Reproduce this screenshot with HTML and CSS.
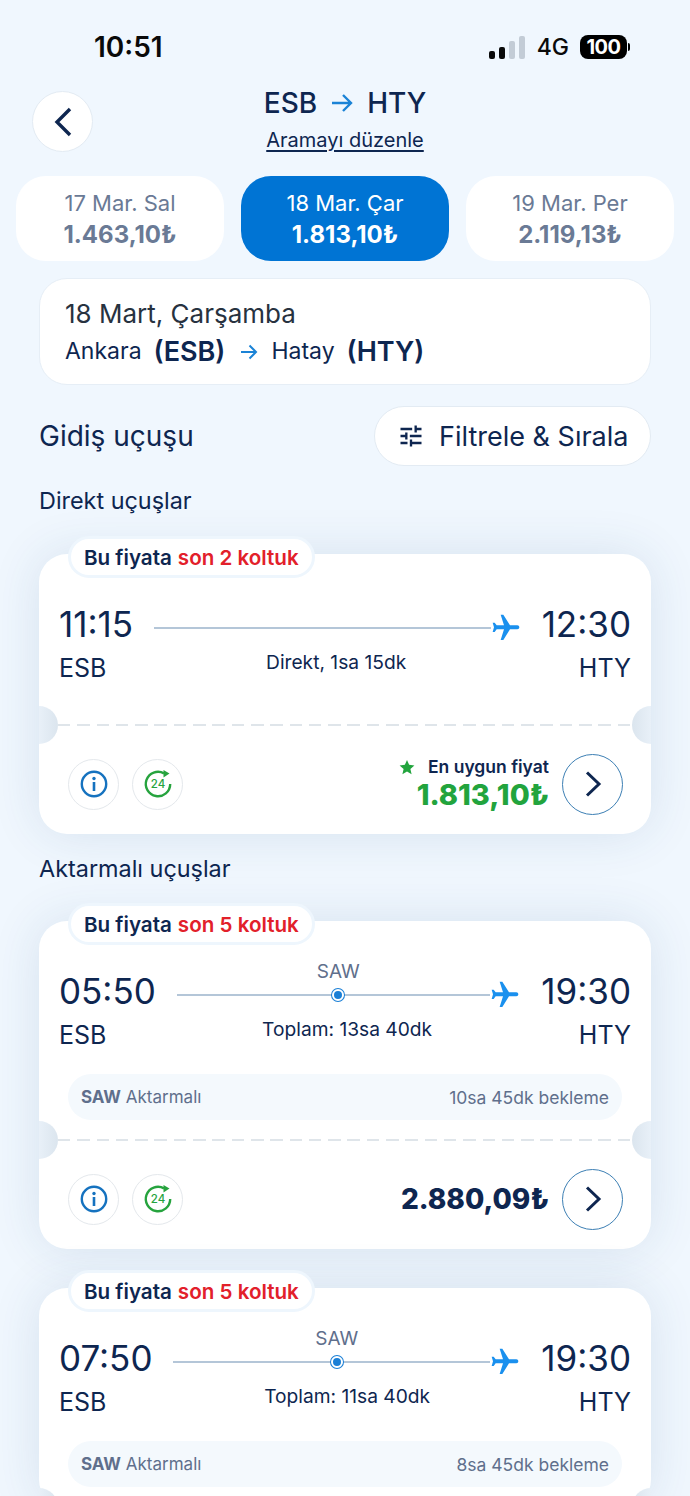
FILE: index.html
```html
<!DOCTYPE html>
<html lang="tr">
<head>
<meta charset="utf-8">
<title>ESB → HTY</title>
<link rel="stylesheet" href="styles.css">
</head>
<body>
<div class="page">
  <div class="status">
    <span class="clock">10:51</span>
    <div class="status-right">
      <div class="signal"><i class="b1"></i><i class="b2"></i><i class="b3"></i><i class="b4"></i></div>
      <span class="net">4G</span>
      <div class="battery"><span class="battery-body">100</span><i class="battery-nub"></i></div>
    </div>
  </div>

  <header class="header">
    <div class="back">
      <svg width="22" height="32" viewBox="0 0 22 32"><path d="M18 3 5 16l13 13" fill="none" stroke="#0e2650" stroke-width="3.4"/></svg>
    </div>
    <div class="title-block">
      <div class="title">
        <span>ESB</span>
        <svg class="title-arrow" width="22" height="20" viewBox="0 0 22 20"><path d="M1 10h19M12 2l8 8-8 8" fill="none" stroke="#1b83d6" stroke-width="2.4"/></svg>
        <span>HTY</span>
      </div>
      <a class="edit">Aramayı düzenle</a>
    </div>
    <div></div>
  </header>

  <nav class="tabs">
    <div class="tab"><span class="tab-date">17 Mar. Sal</span><span class="tab-price">1.463,10₺</span></div>
    <div class="tab tab-active"><span class="tab-date">18 Mar. Çar</span><span class="tab-price">1.813,10₺</span></div>
    <div class="tab"><span class="tab-date">19 Mar. Per</span><span class="tab-price">2.119,13₺</span></div>
  </nav>

  <section class="info">
    <div class="info-date">18 Mart, Çarşamba</div>
    <div class="info-route">
      <span>Ankara</span><b>(ESB)</b>
      <svg class="info-arrow" width="18" height="16" viewBox="0 0 18 16"><path d="M1 8h15M9.500 1.500 16 8l-6.500 6.500" fill="none" stroke="#1b83d6" stroke-width="2"/></svg>
      <span>Hatay</span><b>(HTY)</b>
    </div>
  </section>

  <div class="heading-row">
    <h2 class="heading">Gidiş uçuşu</h2>
    <div class="filter">
      <svg width="28" height="28" viewBox="0 0 24 24"><path fill="#0e2650" d="M3 17v2h6v-2H3zM3 5v2h10V5H3zm10 16v-2h8v-2h-8v-2h-2v6h2zM7 9v2H3v2h4v2h2V9H7zm14 4v-2H11v2h10zm-6-4h2V7h4V5h-4V3h-2v6z"/></svg>
      <span>Filtrele &amp; Sırala</span>
    </div>
  </div>

  <h3 class="section">Direkt uçuşlar</h3>

  <article class="card">
    <div class="tag">Bu fiyata <em>son 2 koltuk</em></div>
    <div class="card-top card-top-direct">
      <div class="route">
        <span class="time">11:15</span>
        <div class="line"><i class="seg"></i></div>
        <svg class="plane" width="32" height="32" viewBox="0 0 24 24"><path transform="rotate(90 12 12)" fill="#1a90ee" d="M21 16v-2l-8-5V3.500c0-.83-.67-1.500-1.500-1.500S10 2.670 10 3.500V9l-8 5v2l8-2.500V19l-2 1.500V22l3.500-1 3.500 1v-1.500L13 19v-5.500l8 2.500z"/></svg>
        <span class="time">12:30</span>
      </div>
      <div class="codes">
        <span class="code">ESB</span>
        <span class="dur dur-a">Direkt, 1sa 15dk</span>
        <span class="code">HTY</span>
      </div>
    </div>
    <div class="divider"><i class="notch notch-l"></i><i class="notch notch-r"></i></div>
    <div class="card-bottom">
      <div class="round">
        <svg width="30" height="30" viewBox="0 0 30 30"><circle cx="15" cy="15" r="12.200" fill="none" stroke="#1572bf" stroke-width="2.400"/><circle cx="15" cy="9.500" r="1.700" fill="#1572bf"/><rect x="13.700" y="13" width="2.600" height="9" fill="#1572bf"/></svg>
      </div>
      <div class="round">
        <svg width="30" height="30" viewBox="0 0 30 30"><path d="M21 4.400A12.200 12.200 0 1 0 27.200 15" fill="none" stroke="#26a33e" stroke-width="2.400"/><path d="M20.500 1 26.500 4.600 20.500 8.500z" fill="#26a33e"/><text x="15" y="19" class="t24">24</text></svg>
      </div>
      <div class="price-block">
        <div class="best">
          <svg width="16" height="16" viewBox="0 0 24 24"><path fill="#22a43d" d="M12 1.500l3.200 7.300 7.900.8-6 5.300 1.800 7.800L12 18.600l-6.900 4.100 1.800-7.800-6-5.300 7.900-.8z"/></svg>
          <span>En uygun fiyat</span>
        </div>
        <div class="price price-best">1.813,10₺</div>
      </div>
      <div class="next">
        <svg width="18" height="28" viewBox="0 0 18 28"><path d="M3 2.500 15 14 3 25.500" fill="none" stroke="#0e2650" stroke-width="3"/></svg>
      </div>
    </div>
  </article>

  <h3 class="section section-second">Aktarmalı uçuşlar</h3>

  <article class="card">
    <div class="tag">Bu fiyata <em>son 5 koltuk</em></div>
    <div class="card-top">
      <div class="route">
        <span class="time">05:50</span>
        <div class="line">
          <i class="seg seg-a"></i>
          <div class="stop"><span class="stop-code">SAW</span><i class="dot"></i></div>
          <i class="seg seg-b"></i>
        </div>
        <svg class="plane" width="32" height="32" viewBox="0 0 24 24"><path transform="rotate(90 12 12)" fill="#1a90ee" d="M21 16v-2l-8-5V3.500c0-.83-.67-1.500-1.500-1.500S10 2.670 10 3.500V9l-8 5v2l8-2.500V19l-2 1.500V22l3.500-1 3.500 1v-1.500L13 19v-5.500l8 2.500z"/></svg>
        <span class="time">19:30</span>
      </div>
      <div class="codes">
        <span class="code">ESB</span>
        <span class="dur dur-b">Toplam: 13sa 40dk</span>
        <span class="code">HTY</span>
      </div>
      <div class="layover"><span><b>SAW</b> Aktarmalı</span><span class="wait">10sa 45dk bekleme</span></div>
    </div>
    <div class="divider"><i class="notch notch-l"></i><i class="notch notch-r"></i></div>
    <div class="card-bottom">
      <div class="round">
        <svg width="30" height="30" viewBox="0 0 30 30"><circle cx="15" cy="15" r="12.200" fill="none" stroke="#1572bf" stroke-width="2.400"/><circle cx="15" cy="9.500" r="1.700" fill="#1572bf"/><rect x="13.700" y="13" width="2.600" height="9" fill="#1572bf"/></svg>
      </div>
      <div class="round">
        <svg width="30" height="30" viewBox="0 0 30 30"><path d="M21 4.400A12.200 12.200 0 1 0 27.200 15" fill="none" stroke="#26a33e" stroke-width="2.400"/><path d="M20.500 1 26.500 4.600 20.500 8.500z" fill="#26a33e"/><text x="15" y="19" class="t24">24</text></svg>
      </div>
      <div class="price-block"><div class="price">2.880,09₺</div></div>
      <div class="next">
        <svg width="18" height="28" viewBox="0 0 18 28"><path d="M3 2.500 15 14 3 25.500" fill="none" stroke="#0e2650" stroke-width="3"/></svg>
      </div>
    </div>
  </article>

  <article class="card card-third">
    <div class="tag">Bu fiyata <em>son 5 koltuk</em></div>
    <div class="card-top">
      <div class="route">
        <span class="time">07:50</span>
        <div class="line">
          <i class="seg seg-a"></i>
          <div class="stop"><span class="stop-code">SAW</span><i class="dot"></i></div>
          <i class="seg seg-b"></i>
        </div>
        <svg class="plane" width="32" height="32" viewBox="0 0 24 24"><path transform="rotate(90 12 12)" fill="#1a90ee" d="M21 16v-2l-8-5V3.500c0-.83-.67-1.500-1.500-1.500S10 2.670 10 3.500V9l-8 5v2l8-2.500V19l-2 1.500V22l3.500-1 3.500 1v-1.500L13 19v-5.500l8 2.500z"/></svg>
        <span class="time">19:30</span>
      </div>
      <div class="codes">
        <span class="code">ESB</span>
        <span class="dur dur-b">Toplam: 11sa 40dk</span>
        <span class="code">HTY</span>
      </div>
      <div class="layover"><span><b>SAW</b> Aktarmalı</span><span class="wait">8sa 45dk bekleme</span></div>
    </div>
    <div class="divider"><i class="notch notch-l"></i><i class="notch notch-r"></i></div>
  </article>
</div>
</body>
</html>
```
FILE: styles.css
```css
* { box-sizing: border-box; }
html, body { margin: 0; padding: 0; }
body {
  width: 690px;
  height: 1496px;
  overflow: hidden;
  background: #f0f7fe;
  color: #0e2650;
  font-family: Inter, "Liberation Sans", sans-serif;
}
.page { width: 690px; height: 1496px; overflow: hidden; }

.status {
  height: 91px;
  padding: 3px 60px 0 94px;
  display: flex;
  align-items: center;
  justify-content: space-between;
}
.clock { font-size: 28px; font-weight: 600; color: #0a0a0a; }
.status-right { display: flex; align-items: center; }
.signal { display: flex; align-items: flex-end; gap: 4px; height: 23px; margin-right: 12px; }
.signal i { display: block; width: 6px; border-radius: 2px; }
.b1 { height: 8px; background: #0a0a0a; }
.b2 { height: 12px; background: #0a0a0a; }
.b3 { height: 18px; background: #c3ccd6; }
.b4 { height: 23px; background: #c3ccd6; }
.net { font-size: 23px; font-weight: 500; color: #0a0a0a; margin-right: 11px; }
.battery { display: flex; align-items: center; gap: 1px; }
.battery-body {
  width: 47px; height: 24px; border-radius: 8px;
  background: #000; color: #fff;
  font-size: 20px; font-weight: 700; line-height: 24px; text-align: center; letter-spacing: -.5px;
}
.battery-nub { display: block; width: 2px; height: 8px; background: #000; border-radius: 0 2px 2px 0; }

.header {
  display: grid;
  grid-template-columns: 61px 1fr 61px;
  padding: 0 32px;
  height: 61px;
}
.back {
  width: 61px; height: 61px; border-radius: 50%;
  background: #fff; border: 1px solid #e3ebf3;
  display: flex; align-items: center; justify-content: center;
}
.title-block { display: flex; flex-direction: column; align-items: center; }
.title {
  display: flex; align-items: center; gap: 14px;
  margin-top: -3px; height: 30px;
  font-size: 28px; font-weight: 500; line-height: 30px;
}
.edit {
  margin-top: 10px;
  font-size: 20px; line-height: 24px;
  text-decoration: underline; text-underline-offset: 3px;
}

.tabs {
  display: flex; gap: 17px;
  padding: 0 16px;
  margin-top: 24px;
}
.tab {
  flex: 1; height: 85px;
  background: #fff; border-radius: 30px;
  display: flex; flex-direction: column; align-items: center; justify-content: center;
  color: #6a7a95;
}
.tab-active { background: #0074d4; color: #fff; }
.tab-date { font-size: 22px; line-height: 31px; }
.tab-price { font-size: 24px; font-weight: 700; line-height: 31px; }

.info {
  margin: 17px 39px 0;
  height: 107px;
  padding: 16px 25px 0;
  background: #fff;
  border: 1px solid #e6eef6;
  border-radius: 28px;
}
.info-date { font-size: 26px; line-height: 38px; color: #27323f; }
.info-route { display: flex; align-items: center; gap: 12px; font-size: 23px; line-height: 37px; }
.info-route b { font-size: 27px; font-weight: 600; }
.info-arrow { margin: 0 1px 0 3px; }

.heading-row {
  margin: 21px 39px 0;
  height: 60px;
  display: flex; align-items: center; justify-content: space-between;
}
.heading { margin: 0; font-size: 28px; font-weight: 400; }
.filter {
  width: 277px; height: 60px;
  padding-left: 22px;
  display: flex; align-items: center; gap: 14px;
  background: #fff; border: 1px solid #e3ebf3; border-radius: 30px;
  font-size: 27px;
}

.section {
  margin: 20px 39px 0;
  font-size: 23.400px; font-weight: 400; line-height: 30px;
}
.section-second { margin-bottom: -1px; }

.card {
  position: relative;
  margin: 38px 39px 0;
  background: #fff;
  border-radius: 28px;
  box-shadow: 0 0 50px rgba(30, 70, 120, .12);
}
.card-third { margin-top: 39px; }
.tag {
  position: absolute;
  left: 29px; top: -18px;
  height: 42px;
  padding: 0 13px;
  display: flex; align-items: center; gap: 6px;
  background: #fff;
  border: 3px solid #eef6fd;
  border-radius: 21px;
  font-size: 20.600px; font-weight: 600;
  white-space: nowrap;
}
.tag em { font-style: normal; color: #e2202a; }

.card-top { padding: 50px 20px 19px; }
.card-top-direct { padding-bottom: 42px; }
.route { display: flex; align-items: center; height: 40px; }
.time { font-size: 35px; line-height: 40px; font-weight: 400; }
.line {
  flex: 1;
  display: flex; align-items: center;
  margin: 8px 0 0 21px;
  height: 8px;
}
.seg { display: block; height: 2px; background: #b4c6d8; flex: 1; }
.seg-a { flex: 162; }
.seg-b { flex: 152; }
.stop { position: relative; width: 12px; height: 12px; flex: none; }
.stop-code {
  position: absolute;
  left: 50%; bottom: 17px;
  transform: translateX(-50%);
  font-size: 19px; line-height: 24px; color: #5f6f8c;
}
.dot {
  display: block; width: 12px; height: 12px; border-radius: 50%;
  background: #1a7fd6; border: 2px solid #fff;
  box-shadow: 0 0 0 1px #1a7fd6;
}
.plane { flex: none; margin: 8px 20px 0 -1px; }
.codes {
  display: flex; align-items: center; justify-content: space-between;
  margin-top: 8px; height: 30px;
}
.code { font-size: 25px; margin-top: 2px; }
.dur { font-size: 19.200px; margin-top: -10px; }
.dur-a { margin-right: 13px; }
.dur-b { margin-left: 9px; }
.layover {
  margin: 25px 9px 0;
  height: 46px;
  padding: 0 13px;
  display: flex; align-items: center; justify-content: space-between;
  background: #f4f9fd;
  border-radius: 23px;
  font-size: 17px; color: #5f6f8c;
}
.layover b { font-weight: 700; }
.wait { font-size: 17.500px; }

.divider {
  position: relative;
  height: 2px;
  margin: 0 19px;
  background: repeating-linear-gradient(90deg, #dfe5ea 0 12.500px, transparent 12.500px 19.300px);
}
.notch {
  position: absolute;
  top: -18px;
  width: 19px; height: 38px;
}
.notch-l {
  left: -19px;
  border-radius: 0 19px 19px 0;
  background: linear-gradient(90deg, #e8f0f8, #dbe5ee);
}
.notch-r {
  right: -19px;
  border-radius: 19px 0 0 19px;
  background: linear-gradient(270deg, #e8f0f8, #dbe5ee);
}

.card-bottom {
  height: 108px;
  padding: 8px 28px 0 29px;
  display: flex; align-items: center; gap: 13px;
}
.round {
  width: 51px; height: 51px; border-radius: 50%;
  border: 1px solid #e4e8ec;
  display: flex; align-items: center; justify-content: center;
}
.t24 { font-size: 11.500px; font-weight: 500; fill: #26a33e; text-anchor: middle; font-family: Inter, sans-serif; }
.price-block { margin-left: auto; text-align: right; }
.best {
  display: flex; align-items: center; justify-content: flex-end; gap: 13px;
  font-size: 17.500px; font-weight: 600; line-height: 22px;
}
.price { font-size: 28px; font-weight: 800; line-height: 34px; }
.price-best { color: #22a43d; font-size: 29px; }
.next {
  width: 61px; height: 61px; border-radius: 50%;
  border: 1px solid #3d7fb4;
  display: flex; align-items: center; justify-content: center;
}
```
